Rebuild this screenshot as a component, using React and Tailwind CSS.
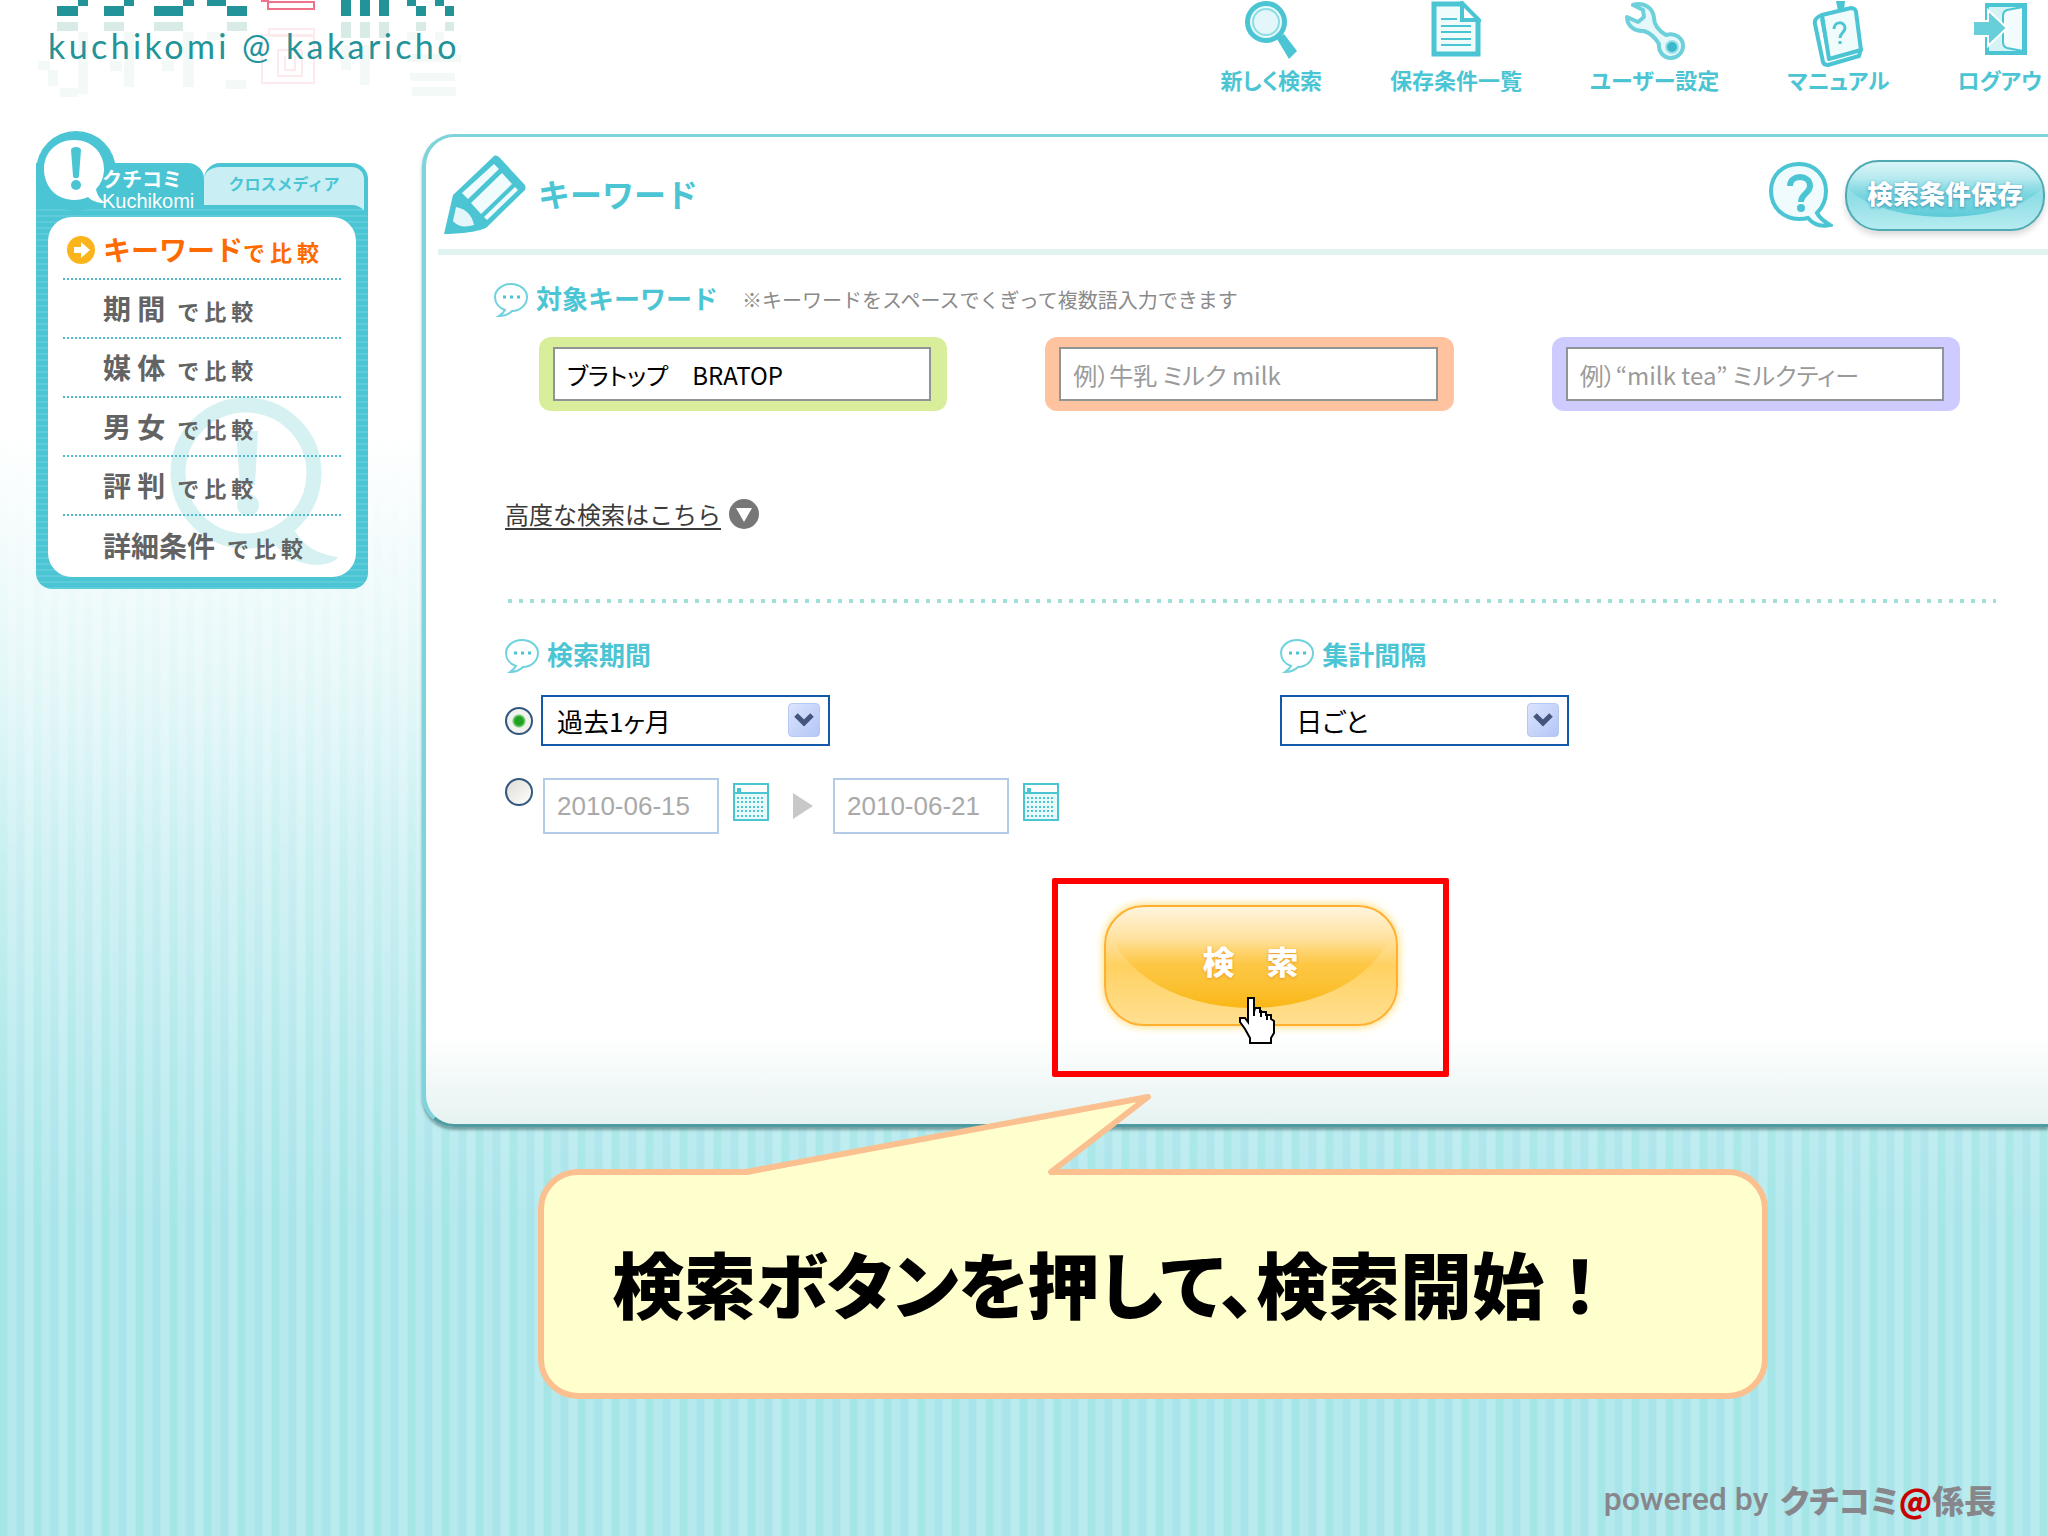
import { useState } from 'react'

const TEAL = '#4bc5d3'

function Logo() {
  return (
    <div className="relative ml-9 h-[110px] w-[440px]">
      <svg className="absolute inset-0" width="440" height="110" viewBox="36 0 440 110" aria-hidden="true">
        <g fill="#23939a">
          <path d="M78 0h10v6H78v10H57V6h21zM124 0h10v6h-10v10h-20V6h20zM183 0h11v6h-11v10h-29V6h29zM207 0h19v6h21v10h-20V6h-20z" />
          <path d="M341 0h10v16h-10zM360 0h10v16h-10zM379 0h10v16h-10z" />
          <path d="M407 0h9v6h10v10h-10V6h-9zM435 0h9v6h10v10h-9V6h-10z" />
        </g>
        <path d="M261 1h7v8h46V2h-46" fill="none" stroke="#f0718a" strokeWidth="2" />
        <g fill="#d8ebe6">
          <path d="M57 22h21v9H57zM104 22h20v9h-20zM154 22h29v9h-29zM227 22h20v9h-20zM341 22h10v16h-10zM360 22h10v16h-10zM379 22h10v16h-10zM416 22h10v9h-10zM445 22h9v9h-9z" />
        </g>
        <g fill="#f2f9f7">
          <path d="M78 32h10v62H78zM124 32h10v55h-10zM183 32h11v55h-11zM207 32h19v8h-19zM407 32h9v8h-9zM435 32h9v8h-9zM38 61h12v9H38zM48 70h10v16H48zM60 88h18v9H60zM341 45h10v25h-10zM360 45h10v40h-10zM407 54h54v8h-54zM410 73h45v8h-45zM412 87h44v9h-44zM110 61h12v10h-12zM162 61h12v10h-12zM226 80h20v9h-20z" />
        </g>
        <path d="M269 29h45v7h-45zM262 35h52v48h-52zM278 50h24v26h-24zM285 56v14h10V56" fill="none" stroke="#fdeaec" strokeWidth="2" />
      </svg>
      <p className="relative ml-3 pt-5 font-['Lato'] text-[34px] leading-[52px] tracking-widest whitespace-nowrap text-[#23939a]">
        kuchikomi @ kakaricho
      </p>
    </div>
  )
}

function SearchIcon() {
  return (
    <svg width="54" height="60" viewBox="0 0 54 60" aria-hidden="true">
      <path d="M33 38l7-5 13 17-8 8z" fill={TEAL} />
      <circle cx="22" cy="21" r="18.500" fill="#eaf9fb" stroke={TEAL} strokeWidth="5" />
      <circle cx="22" cy="21" r="13" fill="#e3f6f9" stroke="#8edde5" strokeWidth="2" />
    </svg>
  )
}

function ListIcon() {
  return (
    <svg width="50" height="60" viewBox="0 0 50 60" aria-hidden="true">
      <path d="M3 3h28l16 17v33H3z" fill="#f0fbfc" stroke={TEAL} strokeWidth="5" />
      <path d="M31 2v17h17z" fill="#fff" stroke={TEAL} strokeWidth="4" />
      <path d="M10 18h16M10 25h30M10 31h30M10 38h30M10 44h30" stroke={TEAL} strokeWidth="2" />
    </svg>
  )
}

function WrenchIcon() {
  return (
    <svg width="62" height="60" viewBox="0 0 62 60" aria-hidden="true">
      <path
        d="M9 4c10-3 20 2 21 13 0 8 7 14 12 17 9-3 17 3 17 11 0 7-6 12-12 12-8 0-13-7-12-14-4-7-9-11-15-13C11 31 3 25 3 16l11 5 6-5-1-7z"
        fill="#e6f8fa"
        stroke="#6dd0db"
        strokeWidth="4"
        strokeLinejoin="round"
      />
      <circle cx="48" cy="46" r="6" fill="#3bb9cb" stroke="#9be0e8" strokeWidth="2" />
    </svg>
  )
}

function ManualIcon() {
  return (
    <svg width="52" height="66" viewBox="0 0 52 66" aria-hidden="true">
      <path d="M24 0h9l-1 10h-6z" fill={TEAL} />
      <path d="M10 14l29-7c3 0 5 2 5 4l5 38-32 9z" fill="#f0fbfc" stroke={TEAL} strokeWidth="4" strokeLinejoin="round" />
      <path d="M10 14c-5 2-8 5-7 9l8 38c1 3 3 3 5 3l31-9 2-8" fill="none" stroke={TEAL} strokeWidth="4" strokeLinejoin="round" />
      <path d="M9 18l8 40" stroke={TEAL} strokeWidth="2" />
      <path d="M22 28c0-8 11-8 11-1 0 4-5 5-5 10M28 40v3" fill="none" stroke={TEAL} strokeWidth="3" />
    </svg>
  )
}

function LogoutIcon() {
  return (
    <svg width="56" height="60" viewBox="0 0 56 60" aria-hidden="true">
      <path d="M15 4h38v48H15z" fill="#d5f2f5" stroke={TEAL} strokeWidth="4" />
      <path d="M35 9l16-3v44l-16-3c-3-1-4-4-4-6V15c0-3 1-5 4-6z" fill="#f3fcfd" stroke={TEAL} strokeWidth="2" />
      <path d="M1 20h15V9l19 18-19 18V35H1z" fill="#67cfda" stroke="#fff" strokeWidth="2" />
    </svg>
  )
}

const MENU = [
  { label: '新しく検索', icon: SearchIcon },
  { label: '保存条件一覧', icon: ListIcon },
  { label: 'ユーザー設定', icon: WrenchIcon },
  { label: 'マニュアル', icon: ManualIcon },
  { label: 'ログアウ', icon: LogoutIcon },
]

function Header() {
  return (
    <header className="flex h-[131px] justify-between">
      <Logo />
      <nav className="flex gap-[68px] pr-1.5 pt-px">
        {MENU.map(({ label, icon: Icon }) => (
          <a key={label} href="#" className="flex flex-col items-center text-[#4bc5d3]">
            <span className="h-16">
              <Icon />
            </span>
            <span className="text-[22px] leading-7 font-bold whitespace-nowrap [font-feature-settings:'palt']">
              {label}
            </span>
          </a>
        ))}
      </nav>
    </header>
  )
}

const COMPARE = ['キーワード', '期 間', '媒 体', '男 女', '評 判', '詳細条件']

function Sidebar() {
  return (
    <aside className="relative w-[332px] shrink-0 pt-8">
      <div className="flex h-[42px]">
        <button
          type="button"
          className="relative z-20 flex w-[168px] shrink-0 flex-col items-start rounded-tr-2xl bg-[#4bc5d3] pt-1 pl-[66px] text-white"
        >
          <svg className="absolute -top-8 left-0" width="90" height="90" viewBox="0 0 90 90" aria-hidden="true">
            <circle cx="40" cy="40" r="40" fill={TEAL} />
            <path d="M38 9c18 0 30 13 30 29 0 8-3 15-8 20 1 6 4 10 9 14-7 0-13-2-17-6-4 2-9 3-14 3C20 69 8 55 8 38 8 22 20 9 38 9z" fill="#fff" />
            <path d="M35 19c0-4 10-4 10 0l-2 26c0 3-6 3-6 0z" fill={TEAL} />
            <circle cx="40" cy="54" r="5" fill={TEAL} />
          </svg>
          <span className="relative text-[20px] leading-6 font-bold">クチコミ</span>
          <span className="relative font-['Liberation_Sans'] text-[20px] leading-5">Kuchikomi</span>
        </button>
        <button
          type="button"
          className="flex h-[60px] grow items-start justify-center rounded-t-2xl border-t-4 border-r-4 border-[#4bc5d3] bg-[#c9eff5] pt-1.5 text-base leading-5 font-bold text-[#4bc5d3]"
        >
          クロスメディア
        </button>
      </div>
      <div className="relative z-10 rounded-b-2xl rounded-tr-2xl bg-[repeating-linear-gradient(180deg,#4bc5d3_0_4px,#5dccd8_4px_6px)] p-3">
        <div className="relative overflow-hidden rounded-3xl bg-white px-[15px] pt-1 pb-0.5">
          <svg className="absolute right-4 bottom-2" width="172" height="172" viewBox="0 0 172 172" aria-hidden="true">
            <circle cx="78" cy="76" r="68" fill="none" stroke="#d6f1f1" strokeWidth="15" />
            <path d="M122 122c6 20 20 34 48 38-10 14-52 10-66-18z" fill="#d6f1f1" />
            <path d="M68 34h22l-3 54H72z" fill="#d6f1f1" />
            <circle cx="80" cy="108" r="11" fill="#d6f1f1" />
          </svg>
          <ul className="relative">
            {COMPARE.map((name, i) => (
              <li
                key={name}
                className="flex h-[59px] items-center border-b-2 border-dotted border-[#4bbcc8] last:border-b-0"
              >
                <span className="w-10 shrink-0">
                  {i === 0 && (
                    <svg className="ml-1" width="28" height="28" viewBox="0 0 28 28" aria-hidden="true">
                      <circle cx="14" cy="14" r="14" fill="#fbb41c" />
                      <path d="M7 11h7V6l9 8-9 8v-5H7z" fill="#fff" />
                    </svg>
                  )}
                </span>
                <a
                  href="#"
                  className={
                    i === 0
                      ? 'flex items-baseline text-[28px] leading-10 font-bold text-[#ff6a00]'
                      : 'flex items-baseline gap-3 text-[28px] leading-10 font-bold text-[#636363]'
                  }
                >
                  {name}
                  <span className="text-[22px]">で 比 較</span>
                </a>
              </li>
            ))}
          </ul>
        </div>
      </div>
    </aside>
  )
}

function PencilIcon() {
  return (
    <svg width="82" height="80" viewBox="0 0 82 80" aria-hidden="true">
      <path d="M50 1c2-1 4 0 6 2l24 26c2 2 2 5 0 7L43 72c-3 3-20 7-43 7L9 40z" fill={TEAL} />
      <path d="M12 52l-3 14c6 7 14 6 21 4-2-10-8-16-18-18z" fill="#e3f6fa" />
      <path d="M18 38L50 9l5 5-31 30zM27 48l31-30 10 11-31 30zM40 62l31-30 3 3-31 30z" fill="#effbfc" />
    </svg>
  )
}

function HelpIcon() {
  return (
    <svg width="64" height="66" viewBox="0 0 64 66" aria-hidden="true">
      <path
        d="M30 2c16 0 27 12 27 27 0 10-4 17-9 22 3 6 8 9 13 12-9 2-17-1-22-7-3 1-6 1-9 1C14 57 2 45 2 29S14 2 30 2z"
        fill="#effbfc"
        stroke={TEAL}
        strokeWidth="4"
      />
      <path d="M21 24c0-12 20-12 20 0 0 7-9 8-9 16" fill="none" stroke={TEAL} strokeWidth="6" />
      <circle cx="32" cy="46" r="4" fill={TEAL} />
    </svg>
  )
}

function BubbleIcon() {
  return (
    <svg width="34" height="34" viewBox="0 0 34 34" aria-hidden="true">
      <path
        d="M17 1c9 0 16 6 16 13 0 8-7 14-15 14-3 3-7 5-13 5 3-2 5-4 6-6C5 25 1 20 1 14 1 7 8 1 17 1z"
        fill="#fff"
        stroke="#6fd2dc"
        strokeWidth="2"
      />
      <path d="M9 14h3M16 14h3M23 14h3" stroke={TEAL} strokeWidth="3" />
    </svg>
  )
}

function CalendarIcon() {
  return (
    <svg width="36" height="38" viewBox="0 0 36 38" aria-hidden="true">
      <path d="M1 1h34v36H1z" fill="#e8f9fa" stroke={TEAL} strokeWidth="2" />
      <path d="M2 2h32v7H2z" fill="#fff" />
      <path d="M1 10h34" stroke={TEAL} strokeWidth="2" />
      <path d="M4 5h4v4H4z" fill={TEAL} />
      <path d="M4 15h28M4 19h28M4 24h28M4 28h28M4 33h28" stroke={TEAL} strokeWidth="2" strokeDasharray="2 2" />
    </svg>
  )
}

function SectionLabel({ children }) {
  return (
    <h3 className="flex h-[34px] items-center gap-2 text-[26px] leading-8 font-bold text-[#4bc5d3]">
      <BubbleIcon />
      <span className="pb-1">{children}</span>
    </h3>
  )
}

function KeywordInput({ label, frame, ...rest }) {
  return (
    <div className={`rounded-xl py-2.5 pr-4 pl-3.5 ${frame}`}>
      <input
        type="text"
        aria-label={label}
        className="block h-[54px] w-full border-2 border-[#8f9494] bg-white px-3 text-[24px] text-black [font-feature-settings:'palt'] placeholder:text-[#9a9a9a]"
        {...rest}
      />
    </div>
  )
}

function Dropdown({ label, options }) {
  return (
    <div className="relative w-[289px]">
      <select
        aria-label={label}
        className="h-[51px] w-full appearance-none border-2 border-[#1259a8] bg-white pl-3.5 text-[26px] leading-8 text-black [font-feature-settings:'palt']"
      >
        {options.map((option) => (
          <option key={option}>{option}</option>
        ))}
      </select>
      <span className="pointer-events-none absolute top-2 right-2.5 flex h-[34px] w-8 items-center justify-center rounded-sm border border-[#b8c8f5] bg-linear-to-br from-[#dbe4fe] to-[#b4c6f6]">
        <svg width="20" height="14" viewBox="0 0 20 14" aria-hidden="true">
          <path d="M2 2l8 8 8-8" fill="none" stroke="#44557d" strokeWidth="5" />
        </svg>
      </span>
    </div>
  )
}

function PeriodRadio({ label, checked, onChange }) {
  return (
    <input
      type="radio"
      name="period"
      aria-label={label}
      checked={checked}
      onChange={onChange}
      className={
        checked
          ? 'size-7 shrink-0 appearance-none rounded-full border-2 border-[#33587f] bg-[radial-gradient(circle,#21a121_0_4px,#7fd07f_6px,#f2f2ee_7px)]'
          : 'size-7 shrink-0 appearance-none rounded-full border-2 border-[#33587f] bg-linear-to-br from-[#dedcd4] to-white'
      }
    />
  )
}

function DateField({ label, value }) {
  return (
    <>
      <input
        type="text"
        aria-label={label}
        defaultValue={value}
        className="h-14 w-[176px] border-2 border-[#b3cbe6] bg-white pl-3 font-['Liberation_Sans'] text-[26px] text-[#a9a9a9]"
      />
      <button type="button" aria-label={`${label} カレンダー`} className="mx-3.5 mb-2">
        <CalendarIcon />
      </button>
    </>
  )
}

function HandCursor() {
  return (
    <svg className="absolute top-[112px] left-[180px] z-10" width="38" height="48" viewBox="0 0 38 48" aria-hidden="true">
      <path
        d="M11 2h5v14l1-4h5v4h6v3h5v4l3 2v12l-3 5v5H12v-5l-5-9-5-7v-4h5l3 4V2z"
        fill="#fff"
        stroke="#000"
        strokeWidth="2"
      />
      <path d="M16 12v8M23 14v7M29 18v6" stroke="#000" strokeWidth="2" />
    </svg>
  )
}

function SearchPanel() {
  const [mode, setMode] = useState('preset')

  return (
    <form className="mt-[3px] rounded-l-[32px] border-y-3 border-l-4 border-[#7fd3da] border-b-[#4f9ba3] bg-linear-to-b from-white from-91% to-[#e6f3f1] pb-[47px] shadow-[0_3px_3px_rgba(70,110,110,0.6)]">
      <div className="flex h-[112px] items-center justify-between pt-1 pl-[18px]">
        <h2 className="flex items-center gap-3 text-[32px] leading-10 font-bold text-[#4bc5d3]">
          <PencilIcon />
          <span className="pb-1">キーワード</span>
        </h2>
        <div className="flex items-center gap-3 pr-[3px]">
          <button type="button" aria-label="ヘルプ">
            <HelpIcon />
          </button>
          <button
            type="button"
            className="relative h-[71px] w-[200px] overflow-hidden rounded-[34px] border-2 border-[#4fa9b3] bg-linear-to-b from-[#d9f5f8] via-[#8edde5] to-[#b4ecf0] pb-1.5 text-[26px] font-black text-white shadow-[0_4px_6px_rgba(0,0,0,0.15)]"
          >
            <span className="absolute -inset-x-2 -top-10 bottom-3 rounded-[50%] bg-linear-to-b from-transparent from-60% to-[#5ccbd7]" />
            <span className="relative text-shadow-[0_1px_3px_#3a8fb0]">検索条件保存</span>
          </button>
        </div>
      </div>
      <div className="ml-3 h-1.5 bg-[#e0f3f1]" />

      <div className="mt-7 flex items-center gap-6 pl-[68px]">
        <SectionLabel>対象キーワード</SectionLabel>
        <p className="text-[20px] leading-8 text-[#8a8a8a]">※キーワードをスペースでくぎって複数語入力できます</p>
      </div>
      <div className="mt-5 mr-[88px] ml-[113px] grid grid-cols-3 gap-[98px]">
        <KeywordInput label="キーワード1" frame="bg-[#d9ee9b]" defaultValue="ブラトップ　BRATOP" />
        <KeywordInput label="キーワード2" frame="bg-[#ffc3a0]" placeholder="例）牛乳 ミルク milk" />
        <KeywordInput label="キーワード3" frame="bg-[#cdcbff]" placeholder="例）“milk tea” ミルクティー" />
      </div>

      <div className="mr-[52px] ml-[79px]">
        <div className="mt-[88px] flex h-[30px] items-center gap-2">
          <a href="#" className="text-[24px] leading-7 text-[#3a3a3a] underline underline-offset-4">
            高度な検索はこちら
          </a>
          <svg width="30" height="30" viewBox="0 0 30 30" aria-hidden="true">
            <circle cx="15" cy="15" r="15" fill="#777" />
            <path d="M7 9h16l-8 14z" fill="#fff" />
          </svg>
        </div>
        <div className="mt-[70px] h-1 bg-[repeating-linear-gradient(90deg,transparent_0_3px,#9fe0da_3px_7px,transparent_7px_11px)]" />

        <div className="mt-9 flex">
          <section className="w-[52%]">
            <SectionLabel>検索期間</SectionLabel>
            <div className="mt-[22px] flex items-center gap-2">
              <PeriodRadio label="期間を選択" checked={mode === 'preset'} onChange={() => setMode('preset')} />
              <Dropdown label="検索期間" options={['過去1ヶ月', '過去3ヶ月', '過去6ヶ月']} />
            </div>
            <div className="mt-8 flex items-start gap-2.5">
              <PeriodRadio label="日付を指定" checked={mode === 'range'} onChange={() => setMode('range')} />
              <div className="flex items-center">
                <DateField label="開始日" value="2010-06-15" />
                <svg className="mr-5 ml-2.5" width="20" height="26" viewBox="0 0 20 26" aria-hidden="true">
                  <path d="M0 0l20 13L0 26z" fill="#c8c8c8" />
                </svg>
                <DateField label="終了日" value="2010-06-21" />
              </div>
            </div>
          </section>
          <section>
            <SectionLabel>集計間隔</SectionLabel>
            <div className="mt-[22px]">
              <Dropdown label="集計間隔" options={['日ごと', '週ごと', '月ごと']} />
            </div>
          </section>
        </div>

        <div className="relative mx-auto mt-11 flex h-[199px] w-[397px] justify-center rounded-xs border-6 border-[#ff0000] pt-[21px]">
          <button
            type="submit"
            className="relative h-[121px] w-[294px] overflow-hidden rounded-[40px] border-2 border-[#ffb030] bg-linear-to-b from-[#fff4dc] via-[#ffd160] to-[#ffdf90] pb-3 text-[32px] font-black text-white shadow-[0_0_10px_#ffd65c]"
          >
            <span className="absolute inset-x-0 -top-24 bottom-4 rounded-[50%] bg-linear-to-b from-transparent from-65% to-[#fab714]" />
            <span className="relative text-shadow-[0_1px_3px_#e89a2c]">検　索</span>
          </button>
          <HandCursor />
        </div>
      </div>
    </form>
  )
}

function Callout() {
  return (
    <div className="relative mt-[42px] mr-[280px] ml-[116px] flex h-[230px] items-center rounded-[40px] border-6 border-[#fac090] bg-[#ffffce] pb-1 pl-[68px]">
      <svg className="absolute -top-[84px] left-[190px]" width="430" height="90" viewBox="0 0 430 90" aria-hidden="true">
        <path d="M12 84L414 6l-97 75v9H12z" fill="#ffffce" />
        <path d="M12 81L414 6l-97 75" fill="none" stroke="#fac090" strokeWidth="6" strokeLinejoin="round" strokeLinecap="round" />
      </svg>
      <p className="text-[72px] leading-[96px] font-black whitespace-nowrap text-black">
        <span className="[font-feature-settings:'palt']">検索ボタンを押して、検索開始</span>！
      </p>
    </div>
  )
}

export default function App() {
  return (
    <div className="flex min-h-screen flex-col overflow-hidden bg-[linear-gradient(180deg,#fff_0%,#fff_28%,rgba(255,255,255,0.7)_44%,rgba(255,255,255,0.4)_56%,rgba(255,255,255,0.15)_70%,transparent_80%),repeating-linear-gradient(90deg,#a4e6e6_0_7px,#b5e9ee_8px_16px,#a9e4ea_17px_24px,#baebef_25px_33px,#a4e6e6_34px)] font-['Noto_Sans_CJK_JP',sans-serif]">
      <Header />
      <main className="flex gap-[54px] pl-9">
        <Sidebar />
        <div className="min-w-0 flex-1">
          <SearchPanel />
          <Callout />
        </div>
      </main>
      <footer className="mt-auto flex items-center justify-end gap-3 pr-[52px] pb-3.5 text-[32px] leading-[46px] text-[#87878b]">
        <span className="font-['Roboto'] font-medium">powered by</span>
        <span className="font-black [font-feature-settings:'palt']">
          クチコミ<span className="text-[#c80000]">@</span>係長
        </span>
      </footer>
    </div>
  )
}
